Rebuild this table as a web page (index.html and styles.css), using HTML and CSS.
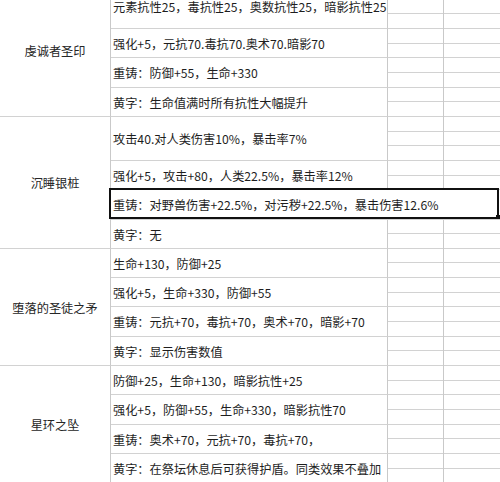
FILE: index.html
```html
<!DOCTYPE html>
<html lang="zh-CN">
<head>
<meta charset="utf-8">
<title>装备属性</title>
<link rel="stylesheet" href="styles.css">
</head>
<body>
<div class="sheet">
  <section class="group">
    <div class="label">虔诚者圣印</div>
    <div class="rows">
      <div class="row"><div class="text">元素抗性25，毒抗性25，奥数抗性25，暗影抗性25</div><div class="blank"><i></i><i></i><i></i></div><div class="blank"><i></i><i></i><i></i></div></div>
      <div class="row"><div class="text">强化+5，元抗70.毒抗70.奥术70.暗影70</div><div class="blank"><i></i><i></i></div><div class="blank"><i></i><i></i></div></div>
      <div class="row"><div class="text">重铸：防御+55，生命+330</div><div class="blank"><i></i><i></i></div><div class="blank"><i></i><i></i></div></div>
      <div class="row"><div class="text">黄字：生命值满时所有抗性大幅提升</div><div class="blank"><i></i><i></i></div><div class="blank"><i></i><i></i></div></div>
    </div>
  </section>
  <section class="group">
    <div class="label">沉睡银桩</div>
    <div class="rows">
      <div class="row"><div class="text">攻击40.对人类伤害10%，暴击率7%</div><div class="blank"><i></i><i></i><i></i></div><div class="blank"><i></i><i></i><i></i></div></div>
      <div class="row"><div class="text">强化+5，攻击+80，人类22.5%，暴击率12%</div><div class="blank"><i></i><i></i></div><div class="blank"><i></i><i></i></div></div>
      <div class="row row-merged"><div class="text text-selected">重铸：对野兽伤害+22.5%，对污秽+22.5%，暴击伤害12.6%</div></div>
      <div class="row"><div class="text">黄字：无</div><div class="blank"><i></i><i></i></div><div class="blank"><i></i><i></i></div></div>
    </div>
  </section>
  <section class="group">
    <div class="label">堕落的圣徒之矛</div>
    <div class="rows">
      <div class="row"><div class="text">生命+130，防御+25</div><div class="blank"><i></i><i></i></div><div class="blank"><i></i><i></i></div></div>
      <div class="row"><div class="text">强化+5，生命+330，防御+55</div><div class="blank"><i></i><i></i></div><div class="blank"><i></i><i></i></div></div>
      <div class="row"><div class="text">重铸：元抗+70，毒抗+70，奥术+70，暗影+70</div><div class="blank"><i></i><i></i></div><div class="blank"><i></i><i></i></div></div>
      <div class="row"><div class="text">黄字：显示伤害数值</div><div class="blank"><i></i><i></i></div><div class="blank"><i></i><i></i></div></div>
    </div>
  </section>
  <section class="group">
    <div class="label">星环之坠</div>
    <div class="rows">
      <div class="row"><div class="text">防御+25，生命+130，暗影抗性+25</div><div class="blank"><i></i><i></i></div><div class="blank"><i></i><i></i></div></div>
      <div class="row"><div class="text">强化+5，防御+55，生命+330，暗影抗性70</div><div class="blank"><i></i><i></i></div><div class="blank"><i></i><i></i></div></div>
      <div class="row"><div class="text">重铸：奥术+70，元抗+70，毒抗+70，</div><div class="blank"><i></i><i></i></div><div class="blank"><i></i><i></i></div></div>
      <div class="row"><div class="text">黄字：在祭坛休息后可获得护盾。同类效果不叠加</div><div class="blank"><i></i><i></i></div><div class="blank"><i></i><i></i></div></div>
    </div>
  </section>
</div>
</body>
</html>
```

FILE: styles.css
```css
html, body {
  margin: 0;
  padding: 0;
  background: #ffffff;
  overflow: hidden;
}

body {
  width: 500px;
  height: 482px;
  font-family: "Noto Sans CJK SC", "Noto Sans", sans-serif;
  font-size: 12.2px;
  color: #1e1e1e;
}

.sheet {
  margin-top: -15px;
  width: 500px;
}

.group {
  display: grid;
  grid-template-columns: 111px 1fr;
}

.label {
  box-sizing: border-box;
  display: flex;
  align-items: center;
  justify-content: center;
  padding-top: 2px;
  border-right: 1px solid #c9c9c9;
  border-bottom: 1px solid #d2d2d2;
  white-space: nowrap;
  color: #262626;
}

.rows {
  display: flex;
  flex-direction: column;
}

.row {
  display: grid;
  grid-template-columns: 277px 56px 1fr;
}

.text {
  box-sizing: border-box;
  display: flex;
  align-items: center;
  padding-left: 2px;
  padding-top: 2px;
  white-space: nowrap;
  border-right: 1px solid #c9c9c9;
  border-bottom: 1px solid #d2d2d2;
  line-height: 1;
}

.blank {
  display: flex;
  flex-direction: column;
}

.blank:nth-child(2) {
  border-right: 1px solid #c9c9c9;
}

.blank i {
  display: block;
  box-sizing: border-box;
  height: 14.66px;
  border-bottom: 1px solid #d2d2d2;
}

.row-merged {
  grid-template-columns: 1fr;
}

.row-merged .text {
  height: 29.32px;
  border-right: none;
}

.text-selected {
  position: relative;
}

.text-selected::after {
  content: "";
  position: absolute;
  left: -2px;
  top: -2px;
  right: 1px;
  bottom: 0;
  border: 2px solid #111111;
}

.text-selected::before {
  content: "";
  position: absolute;
  right: 0;
  bottom: 0;
  width: 4px;
  height: 4px;
  background: #111111;
  z-index: 1;
}
```
